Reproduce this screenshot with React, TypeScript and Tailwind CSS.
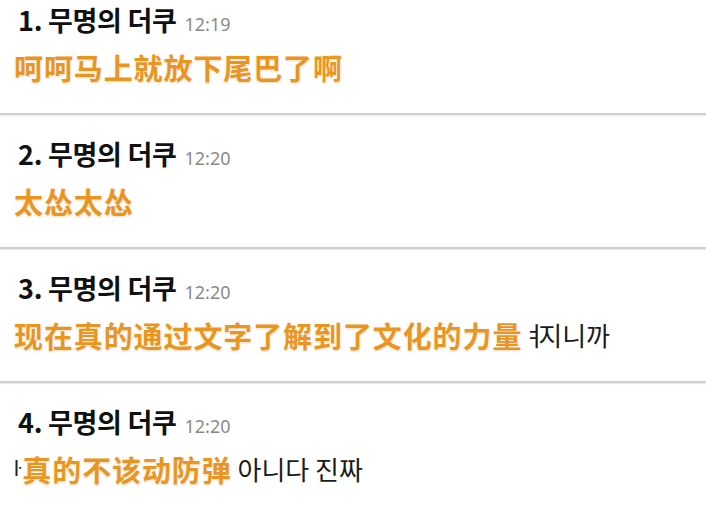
import React from "react";

type Comment = {
  no: number;
  time: string;
  before?: string;
  sub: string;
  cut?: string;
  after?: string;
};

const comments: Comment[] = [
  { no: 1, time: "12:19", sub: "呵呵马上就放下尾巴了啊" },
  { no: 2, time: "12:20", sub: "太怂太怂" },
  { no: 3, time: "12:20", sub: "现在真的通过文字了解到了文化的力量", cut: "ㅕ", after: "지니까" },
  { no: 4, time: "12:20", before: "ŀ", sub: "真的不该动防弹", after: " 아니다 진짜" },
];

const kr = "font-['Noto_Sans_CJK_KR','Noto_Sans',sans-serif]";

const App = () => {
  return (
    <div className="w-[706px] h-[508px] overflow-hidden bg-white">
      {comments.map((c, i) => (
        <div
          key={c.no}
          className={`pl-[18px] ${i === 0 ? "pt-[5px]" : "pt-[24px]"} pb-[28px] border-b-2 border-[#cfcfcf] shadow-[0_1px_1px_#ececec]`}
        >
          <div className="flex items-baseline h-[30px] leading-[30px]">
            <span className={`${kr} text-[27px] font-bold text-[#111] tracking-[-0.3px]`}>
              {c.no}. 무명의 더쿠
            </span>
            <span className="ml-[8px] font-['Noto_Sans',sans-serif] text-[18px] text-[#8a8a8a]">
              {c.time}
            </span>
          </div>
          <div className="mt-[14px] h-[36px] leading-[36px] flex items-center -ml-[4px] whitespace-nowrap">
            {c.before && (
              <span className="font-['Liberation_Sans',sans-serif] text-[22px] text-[#222] mr-[1px]">
                {c.before}
              </span>
            )}
            <span className="font-['Noto_Sans_CJK_SC',sans-serif] font-bold text-[29px] text-[#ea951f] tracking-[0.9px] [text-shadow:0_0_2px_#fff,0_0_1px_#fff,0_1px_2px_rgba(200,110,0,0.35)]">
              {c.sub}
            </span>
            {c.after && (
              <span className={`${kr} text-[26px] text-[#1a1a1a] whitespace-pre`}>
                {c.cut && <span className="tracking-[-8px]">{c.cut}</span>}
                {c.after}
              </span>
            )}
          </div>
        </div>
      ))}
    </div>
  );
};

export default App;
